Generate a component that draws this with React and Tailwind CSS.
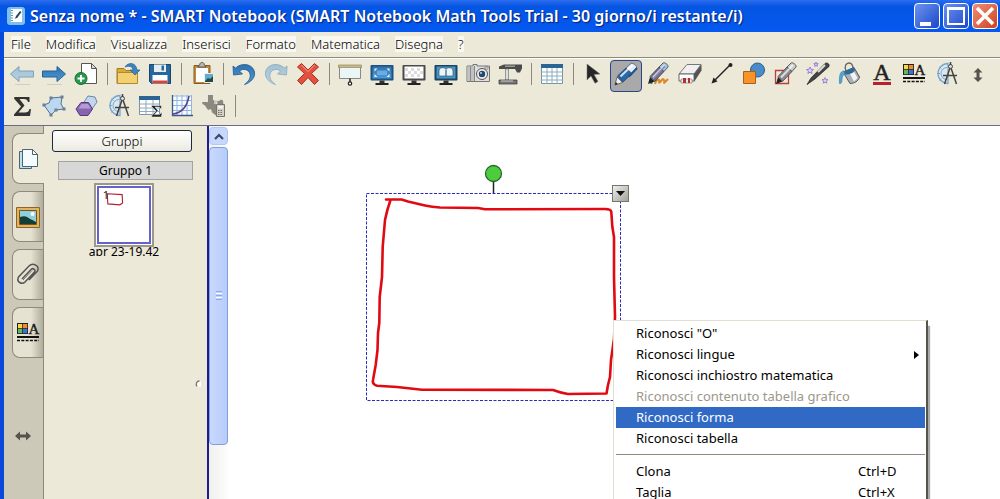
import React, { useState } from 'react';

const menus = ['File', 'Modifica', 'Visualizza', 'Inserisci', 'Formato', 'Matematica', 'Disegna', '?'];

const Svg = ({ children, size = 24 }) => (
  <svg width={size} height={size} viewBox="0 0 24 24" fill="none" className="block shrink-0 overflow-visible">
    {children}
  </svg>
);

const Monitor = ({ fill, frame, children }) => (
  <Svg>
    <rect x="0.5" y="3" width="23" height="15.5" rx="1" fill={frame} />
    <rect x="2.500" y="4.500" width="19" height="12" fill={fill} />
    {children}
    <path d="M9.500 18.500h5v2.500h-5z" fill="#333" />
    <path d="M5.500 21h13v2h-13z" fill="#222" />
  </Svg>
);

const Compass = () => (
  <Svg>
    <path d="M14 1.500a10 10 0 1 0 0 20z" fill="#dbe8f1" stroke="#7ba6c8" strokeWidth="1.300" />
    <path d="M13 5.500a6 6 0 1 0 0 12M3 11.500h3M5.500 4.500l2 2M5.500 18.500l2-2" stroke="#7ba6c8" />
    <path d="M16 6L10.500 22M17 6l5.500 16M9 13.500h14" stroke="#444" strokeWidth="1.500" />
    <circle cx="16.500" cy="4.500" r="2" fill="#ddd" stroke="#444" />
    <path d="M16.500 0v3" stroke="#444" strokeWidth="1.500" />
  </Svg>
);

const Properties = () => (
  <Svg>
    <rect x="1" y="2" width="11" height="11" fill="#222" />
    <path d="M2 3h4.200v4.200H2z" fill="#f7d64a" />
    <path d="M7 3h4.200v4.200H7z" fill="#ef8b2c" />
    <path d="M2 8h4.200v4.200H2z" fill="#5fb760" />
    <path d="M7 8h4.200v4.200H7z" fill="#3a72d8" />
    <text x="12.500" y="13" fontFamily="Liberation Serif, serif" fontSize="15" fill="#1c1c1c" stroke="#1c1c1c" strokeWidth="0.400">A</text>
    <path d="M1 16h22" stroke="#111" strokeWidth="2" />
    <path d="M1 19.500h22" stroke="#111" strokeWidth="1.500" strokeDasharray="3 1.300" />
  </Svg>
);

const Marker = ({ body, cap = '#e6e6e6' }) => (
  <>
    <path d="M2 22l2-7 4.500 4.500z" fill="#222" />
    <path d="M4 14.500L13 5l5 4.500-9.500 10z" fill={body} stroke="#39424e" strokeWidth="0.800" />
    <path d="M13 5l4-4c1.500-1.200 6 2 5 4l-4 4.500z" fill={cap} stroke="#39424e" strokeWidth="0.800" />
    <path d="M7 15.500L19 3" stroke="#fff" strokeOpacity="0.700" strokeWidth="2" />
  </>
);

const icons = {
  back: (
    <Svg>
      <path d="M0.500 12L9 4.500V9h14.500v6H9v4.500z" fill="url(#pale)" stroke="#7da2bb" />
      <path d="M5 22.500h15" stroke="#d2cebd" />
    </Svg>
  ),
  forward: (
    <Svg>
      <path d="M23.500 12L15 4.500V9H0.500v6H15v4.500z" fill="url(#blue)" stroke="#24629b" />
      <path d="M5 22.500h15" stroke="#d2cebd" />
    </Svg>
  ),
  addPage: (
    <Svg>
      <path d="M7.500 1.500h10l5 5v15h-15z" fill="#fff" stroke="#555" />
      <path d="M17.500 1.500v5h5z" fill="#ddd" stroke="#555" />
      <circle cx="7" cy="16.500" r="6" fill="#259a4d" stroke="#176b33" />
      <path d="M3.500 16.500h7M7 13v7" stroke="#fff" strokeWidth="2" />
    </Svg>
  ),
  open: (
    <Svg>
      <path d="M1 6.500h7l2 2h9v13H1z" fill="#d9a93c" stroke="#a47a20" />
      <path d="M1.500 10.500H21.500v11h-20z" fill="#f3d071" stroke="#b08930" />
      <path d="M9 5c3-5 11-5 12 3h3l-5 5-5-5h3c0-3-4-5-8-3z" fill="#3c85be" stroke="#245f91" strokeWidth="0.700" />
    </Svg>
  ),
  save: (
    <Svg>
      <path d="M1.500 2.500h21v19h-19l-2-2z" fill="#25679f" stroke="#184669" />
      <path d="M6 2.500h12v7.500H6z" fill="#e9edf0" />
      <path d="M13.500 3.500h2.500v5h-2.500z" fill="#25679f" />
      <path d="M4.500 13h15v8.500h-15z" fill="#fff" />
      <path d="M4.500 18.500h15v3h-15z" fill="#d2463b" />
    </Svg>
  ),
  paste: (
    <Svg>
      <path d="M4 3.500h16v18H4z" fill="#c48b3f" stroke="#875c22" />
      <path d="M6 6h12v14H6z" fill="#fff" />
      <path d="M8 5c0-2 2-1 2-3s4-2 4 0 2 1 2 3z" fill="#bbb" stroke="#555" />
      <path d="M14.500 11.500h9v9h-9z" fill="#5eaed2" stroke="#eee" />
      <path d="M15 19l3-3 2 1 3-3v6h-8z" fill="#244a3d" />
    </Svg>
  ),
  undo: (
    <Svg>
      <path d="M1 4l2.500 2C10 0 21 2 22.500 10c1 6-4 10.500-10 12.500 4-3 6.500-6.500 5.500-10.500C17 7.500 11 6 7.500 9l3 3-9 1z" fill="url(#blue)" stroke="#1e5b92" strokeWidth="0.800" />
    </Svg>
  ),
  redo: (
    <Svg>
      <path d="M23 4l-2.500 2C14 0 3 2 1.500 10c-1 6 4 10.500 10 12.500-4-3-6.500-6.500-5.500-10.500C7 7.500 13 6 16.500 9l-3 3 9 1z" fill="url(#pale)" stroke="#8ba7b8" strokeWidth="0.800" />
    </Svg>
  ),
  remove: (
    <Svg>
      <path d="M5.500 1.500L12 8l6.500-6.500 4 3.500-7 6.500 7 7-4 4-6.500-7-6.500 7-4-4 7-7-7-6.500z" fill="#e4503f" stroke="#a72c22" />
      <path d="M5.500 3L12 9.500 18.500 3" stroke="#f7a497" />
    </Svg>
  ),
  screen: (
    <Svg>
      <path d="M1.500 4h21v12.500h-21z" fill="#eaf5f6" stroke="#888" />
      <path d="M0.500 3h23v2.500h-23z" fill="#c9b98a" stroke="#8b7a4e" strokeWidth="0.600" />
      <path d="M12 16.500v4" stroke="#222" strokeWidth="1.500" />
      <circle cx="12" cy="21.500" r="1.700" fill="#fff" stroke="#222" strokeWidth="1.200" />
    </Svg>
  ),
  fullScreen: (
    <Monitor fill="url(#blue)" frame="#1d5380">
      <path d="M4.500 6.500h3l-3 3zM19.500 6.500h-3l3 3zM4.500 15h3l-3-3zM19.500 15h-3l3-3z" fill="#e6f4ff" />
      <path d="M7 8.500h10v4.500H7z" fill="#8cc4ee" fillOpacity="0.600" />
    </Monitor>
  ),
  transparent: (
    <Monitor fill="#fff" frame="#4a4a4a">
      <path d="M3 7.500h18M3 13.500h18" stroke="#dcdcdc" strokeWidth="3" strokeDasharray="3 3" />
      <path d="M6 10.500h15" stroke="#dcdcdc" strokeWidth="3" strokeDasharray="3 3" />
    </Monitor>
  ),
  dualPage: (
    <Monitor fill="#4d96c4" frame="#1b4563">
      <path d="M5 14V9c0-4 5-4 7-2 2-2 7-2 7 2v5z" fill="#eaf5fb" stroke="#1b4563" strokeWidth="0.600" />
      <path d="M12 7.500V14" stroke="#1b4563" />
    </Monitor>
  ),
  camera: (
    <Svg>
      <path d="M1 4h6V2.500h4V4h12.500v15.500H1z" fill="#dedede" stroke="#777" />
      <path d="M1.500 4.500h7v14.500h-7z" fill="#c2c2c2" />
      <path d="M4.500 4v15.500M8.500 4v15.500" stroke="#888" />
      <circle cx="16" cy="12" r="5.500" fill="#eee" stroke="#555" />
      <circle cx="16" cy="12" r="3.200" fill="#26466c" />
      <circle cx="15" cy="11" r="1" fill="#b8d8f5" />
      <path d="M19 5h3v2h-3z" fill="#fff" stroke="#555" strokeWidth="0.600" />
    </Svg>
  ),
  docCamera: (
    <Svg>
      <path d="M1 4.500L6 2.500h18v4l-2 4h-3l-2-3.500H1z" fill="#4b4b4b" />
      <path d="M7 3.500h10v1.500H7z" fill="#999" />
      <path d="M7.500 7h3v11h-3z" fill="#ddd" stroke="#777" strokeWidth="0.700" />
      <path d="M1 18h18v4H1z" fill="#777" stroke="#333" strokeWidth="0.700" />
      <path d="M3 19h12" stroke="#ccc" />
    </Svg>
  ),
  table: (
    <Svg>
      <path d="M1.500 2.500h21v19h-21z" fill="#fff" stroke="#7594aa" />
      <path d="M1 2h22v4H1z" fill="#2a6596" />
      <path d="M1.500 10h21M1.500 14h21M1.500 18h21M7 6v16M12 6v16M17 6v16" stroke="#8daabd" />
    </Svg>
  ),
  select: (
    <Svg>
      <path d="M5 2l13 10-6 0.500 4 7-3 1.800-4-7.300-4 4z" fill="#272727" stroke="#777" strokeWidth="0.500" />
    </Svg>
  ),
  pen: (
    <Svg>
      <path d="M1 23l2-8 5.500 5.500z" fill="#eee" stroke="#444" strokeWidth="0.700" />
      <path d="M1 23l.8-3 2 2z" fill="#222" />
      <path d="M3.500 14L12 6l6 5.500-9 8.500z" fill="#2a67a8" stroke="#1d3f6b" strokeWidth="0.800" />
      <path d="M12 6l5-4.500c2-1 6.500 2.500 5.500 4.500L18 11.500z" fill="#e4edf5" stroke="#42566e" strokeWidth="0.800" />
      <path d="M6.500 14.500L18.500 3" stroke="#fff" strokeOpacity="0.800" strokeWidth="2" />
      <path d="M15 14.500L23 6" stroke="#1d4f8f" strokeWidth="2" />
    </Svg>
  ),
  creativePen: (
    <Svg>
      <path d="M9 22c1-4 3-5 4-4s-1 4 1 2 3-4 4-2-1 4 1 2l3-3" stroke="#dd8427" strokeWidth="2" />
      <path d="M5 22c2-5 4-5 5-3" stroke="#3b9442" strokeWidth="2" />
      <Marker body="#667686" cap="#9cc7d8" />
      <path d="M7 17L19 4" stroke="#a976bb" strokeWidth="1.500" />
    </Svg>
  ),
  eraser: (
    <Svg>
      <path d="M9 2.500h14L16 12H1z" fill="#f0f0f0" stroke="#777" />
      <path d="M1 12h15v7H1z" fill="#fff" stroke="#666" />
      <path d="M16 12l7.500-9.500v6L16 20z" fill="#555" />
      <path d="M3 17h11v4H3z" fill="#eee" stroke="#555" strokeWidth="0.500" />
      <path d="M5 16h3v5H5zM10 16h2v5h-2z" fill="#b92e24" />
    </Svg>
  ),
  line: (
    <Svg>
      <path d="M4 19L20 3" stroke="#222" strokeWidth="1.500" />
      <circle cx="20.500" cy="3" r="2" fill="#222" />
      <path d="M1.500 21.500l2-6 4 4z" fill="#222" />
    </Svg>
  ),
  shapes: (
    <Svg>
      <circle cx="15.500" cy="8" r="7" fill="#4a8cc9" stroke="#2a5d91" />
      <path d="M1.500 9.500h12v12h-12z" fill="#f5942a" stroke="#b25d12" />
    </Svg>
  ),
  shapePen: (
    <Svg>
      <path d="M1.500 8.500h13v13h-13z" fill="#f2e7df" stroke="#b8423a" strokeWidth="1.300" />
      <Marker body="#8b8b8b" cap="#c9c9c9" />
    </Svg>
  ),
  magicPen: (
    <Svg>
      <path d="M1 22.500L5 16 19 1.500c2-1.500 5 0.500 4 3L9 17z" fill="#444" stroke="#222" strokeWidth="0.700" />
      <path d="M12 10l7-7" stroke="#ddd" strokeWidth="2" />
      <path d="M4 5l1 2.300 2.500.2-2 1.600.6 2.400L4 10.200l-2.100 1.300.6-2.400-2-1.600L3 7.300zM10 0l.6 1.600 1.700.1-1.300 1 .4 1.700L10 3.500l-1.400.9.400-1.700-1.300-1 1.700-.1zM19 15.500l.8 2 2.200.2-1.700 1.400.5 2.100-1.800-1.100-1.800 1.100.5-2.100-1.700-1.400 2.200-.2z" fill="#ddd0f5" stroke="#8e6dc9" strokeWidth="0.800" />
    </Svg>
  ),
  fill: (
    <Svg>
      <path d="M8 9C6 4 8 1 11 1s4 3 4 6" stroke="#666" strokeWidth="1.300" />
      <path d="M5 10l11-4.500L21.500 15c-1 4-5 6.500-9.500 6.500z" fill="#aab0b5" stroke="#555" />
      <path d="M11 10l4-2 4.500 8-3.500 3.500z" fill="#f4f4f4" />
      <path d="M5 10l11-4.500 1 2.500c-1 3-6 5-10.500 4.500z" fill="#2c6c9c" />
      <path d="M6 9c-4 0-5 5-4.500 12.500 2 .5 2.500-1.500 2.500-4s1-5 3-5.500z" fill="#55a4d3" stroke="#347aaa" strokeWidth="0.600" />
    </Svg>
  ),
  text: (
    <Svg>
      <text x="12" y="18" textAnchor="middle" fontFamily="Liberation Serif, serif" fontSize="24" fill="#222" stroke="#222" strokeWidth="0.500">A</text>
      <path d="M3 20h18v3H3z" fill="#b9202b" />
    </Svg>
  ),
  properties: <Properties />,
  measure: <Compass />,
  equation: (
    <Svg>
      <path d="M4.500 3h15v5h-1.500c-.5-2-1.500-3-4-3H9.500l5 6.500-6 7h6.500c2.500 0 4-1 4.500-3.500H21L20 22H4v-1.500l7-8-7-8z" fill="#333" />
    </Svg>
  ),
  irregular: (
    <Svg>
      <path d="M9 4l11-1-1 7 3 5-8 1-5 5-7-10 5-2z" fill="#bcd8f1" stroke="#56718d" />
      <path d="M7.500 2.500h3v3h-3zM18.500 1.500h3v3h-3zM20.500 13.500h3v3h-3zM12.500 14.500h3v3h-3zM7.500 19.500h3v3h-3zM.500 9.500h3v3h-3z" fill="#667f96" />
    </Svg>
  ),
  polygon: (
    <Svg>
      <path d="M14 2l7 1 2 5-5 7-7-2-1-5z" fill="#c2d6ee" stroke="#6b88aa" />
      <path d="M7 8.500h7.500l4 6.500-4.500 6.500H6L2 15z" fill="#8863b0" stroke="#55377c" />
      <path d="M7.500 10h6.500l3 4.500H4.500z" fill="#b59bd2" />
    </Svg>
  ),
  tableSum: (
    <Svg>
      <path d="M1.500 2.500h20v18h-20z" fill="#fff" stroke="#7893a7" />
      <path d="M1 2h21v4H1z" fill="#2a6596" />
      <path d="M1.500 10h20M1.500 14h20M1.500 17.500h20M8 6v15M15 6v15" stroke="#8daabd" />
      <path d="M13.500 11.500h10v3.500h-1c0-1.500-1-2-2.500-2h-3l3 3.500-3.500 4h4c1.500 0 2-.5 2.500-2h1l-.5 4.500h-10V22l4.500-5-4.500-4.500z" fill="#222" stroke="#fff" strokeWidth="0.500" />
    </Svg>
  ),
  graph: (
    <Svg>
      <path d="M2 1.500h20v20H2z" fill="#f7faff" />
      <path d="M7 1v21M12 1v21M17 1v21M21.500 1v21M2 2h20M2 6.500h20M2 11.500h20M2 16.500h20" stroke="#8eb7df" />
      <path d="M2.500 1v20.500H23" stroke="#385a82" strokeWidth="1.300" />
      <path d="M3 20c8-1 14-7 16-18" stroke="#5d3c91" strokeWidth="1.500" />
    </Svg>
  ),
  calculator: (
    <Svg>
      <path d="M6 1h5v5l6 1 2-1.500 2 1 1 8-7 3-1 4-4-3-1-3.500-3 1-3-4.500-2.500-1.500L0 8h6z" fill="#8b8880" />
      <path d="M13 4v6M13 1v1.500M16.500 3c-2 3-2 5-2 8" stroke="#ece9d8" strokeWidth="1.300" />
      <path d="M14.500 10.500h8v12h-8z" fill="#d3d0c8" stroke="#77746d" />
      <path d="M16 12h5v2.500h-5z" fill="#f4f2ea" />
      <path d="M16 16.500h5M16 18.500h5M16 20.500h5" stroke="#77746d" strokeDasharray="1.500 1" />
    </Svg>
  ),
};

const mainTools = [
  'back', 'forward', 'addPage', '|', 'open', 'save', '|', 'paste', '|', 'undo', 'redo', 'remove', '|',
  'screen', 'fullScreen', 'transparent', 'dualPage', 'camera', 'docCamera', '|', 'table', '|',
  'select', 'pen', 'creativePen', 'eraser', 'line', 'shapes', 'shapePen', 'magicPen', 'fill', 'text', 'properties', 'measure',
];

const mathTools = ['equation', 'irregular', 'polygon', 'measure', 'tableSum', 'graph', 'calculator', '|'];

const Separator = () => (
  <span className="flex h-7 w-[10px] shrink-0 items-center justify-center">
    <span className="h-[22px] w-px bg-[#8d8a7c]" />
  </span>
);

const ToolRow = ({ tools, active, onPick, children }) => (
  <div className="flex h-8">
    {tools.map((tool, i) =>
      tool === '|' ? (
        <Separator key={i} />
      ) : (
        <button
          key={i}
          type="button"
          aria-label={tool}
          onClick={() => onPick(tool)}
          className={
            active === tool
              ? 'flex size-8 shrink-0 items-start justify-center rounded border border-[#2c4684] bg-[#a9a9a9] pt-px'
              : 'flex size-8 shrink-0 items-start justify-center pt-0.5'
          }
        >
          {icons[tool]}
        </button>
      )
    )}
    {children}
  </div>
);

const TitleBar = () => (
  <header className="flex h-8 shrink-0 items-center bg-linear-to-b from-[#2a6cf0] via-[#0355e2] via-20% to-[#0558f0] pl-[7px] pr-0.5">
    <svg width="18" height="18" viewBox="0 0 18 18" className="shrink-0">
      <rect width="18" height="18" rx="3" fill="#7fc0ea" />
      <path d="M4 2h11v13H4z" fill="#fff" />
      <path d="M5 3v12" stroke="#3a6f98" strokeWidth="1.500" strokeDasharray="1 1.500" />
      <path d="M8 12l1-3 4-5 1.500 1-4 5.500z" fill="#27455e" />
    </svg>
    <h1 className="ml-[5px] min-w-0 flex-1 truncate font-['Noto_Sans',sans-serif] text-[16px] font-semibold leading-6 text-white [text-shadow:1px_1px_1px_#0a1f7a]">
      Senza nome * - SMART Notebook (SMART Notebook Math Tools Trial - 30 giorno/i restante/i)
    </h1>
    <div className="flex gap-[3px]">
      <button type="button" aria-label="Riduci a icona" className="size-[26px] rounded border border-white bg-linear-to-br from-[#6d93f0] to-[#1d45c8]">
        <svg viewBox="0 0 24 24"><path d="M5 18h11v4H5z" fill="#fff" /></svg>
      </button>
      <button type="button" aria-label="Ingrandisci" className="size-[26px] rounded border border-white bg-linear-to-br from-[#6d93f0] to-[#1d45c8]">
        <svg viewBox="0 0 24 24" fill="none"><path d="M4 5h16v15H4z" stroke="#fff" strokeWidth="2" /><path d="M3 4.500h18" stroke="#fff" strokeWidth="3" /></svg>
      </button>
      <button type="button" aria-label="Chiudi" className="size-[26px] rounded border border-white bg-linear-to-br from-[#ef8e72] to-[#cf3f1c]">
        <svg viewBox="0 0 24 24"><path d="M4 4l16 16M20 4L4 20" stroke="#fff" strokeWidth="3.500" /></svg>
      </button>
    </div>
  </header>
);

const tabs = [
  {
    name: 'Pagine',
    icon: (
      <Svg>
        <path d="M2.500 4.500h12v17h-12z" fill="#bfe0ea" stroke="#4d6570" />
        <path d="M5.500 2.500h10l5 5v12h-15z" fill="#f5fcff" stroke="#4d6570" />
        <path d="M15.500 2.500v5h5z" fill="#fff" stroke="#4d6570" />
      </Svg>
    ),
  },
  {
    name: 'Raccolta',
    icon: (
      <Svg>
        <path d="M.500 2.500h23v20H.500z" fill="#e0b562" stroke="#8d6425" />
        <path d="M3.500 5.500h17v14h-17z" fill="#8fd0dd" stroke="#7a5418" />
        <circle cx="16.500" cy="9" r="2" fill="#fff" />
        <path d="M4 12c5-2 8 0 10 2 3 1 4 2 6 3v2H4z" fill="#143e36" />
      </Svg>
    ),
  },
  {
    name: 'Allegati',
    icon: (
      <Svg>
        <path d="M6 16l9-9.500c2-2 5 0 3.500 2.500L9 19c-3 3-9 0-6.500-5L13 3c4-4 11 0 8.500 5L13 17" stroke="#555" strokeWidth="1.500" />
        <path d="M7 17l9-9.500" stroke="#777" />
      </Svg>
    ),
  },
  { name: 'Proprietà', icon: <Properties /> },
];

const Sidebar = () => {
  const [tab, setTab] = useState('Pagine');

  return (
    <aside className="flex shrink-0">
      <nav className="flex w-10 flex-col items-end gap-[7px] border-r border-[#8d8a7c] bg-[#cdc9b8] pt-[7px]">
        {tabs.map((t) => (
          <button
            key={t.name}
            type="button"
            aria-label={t.name}
            onClick={() => setTab(t.name)}
            className={
              tab === t.name
                ? 'relative -mr-px flex h-[51px] w-8 shrink-0 items-center justify-center rounded-l-lg border border-r-0 border-[#8d8a7c] bg-[#ece9d8]'
                : 'flex h-[51px] w-[31px] shrink-0 items-center justify-center rounded-l-lg border border-r-0 border-[#8d8a7c] bg-linear-to-r from-[#e6e2d2] from-60% to-[#b1ad9c]'
            }
          >
            {t.icon}
          </button>
        ))}
        <svg width="16" height="10" viewBox="0 0 16 10" className="mr-3 mt-[66px]">
          <path d="M0 5l5-4.500v3h6v-3L16 5l-5 4.500v-3H5v3z" fill="#55534b" />
        </svg>
      </nav>
      <section className="flex w-[163px] items-stretch bg-[#ece9d8]">
        <div className="flex flex-1 flex-col pl-2 pt-1">
          <button type="button" className="h-[22px] w-[140px] rounded-[3px] border border-[#1c2a3c] bg-linear-to-b from-white to-[#eceadf] text-[13px] leading-5">
            Gruppi
          </button>
          <h2 className="ml-1.5 mt-[9px] h-[19px] w-[135px] border border-[#a3a3a3] bg-[#d7d7d7] text-center text-[12px] font-normal leading-[18px]">
            Gruppo 1
          </h2>
          <figure className="ml-1.5 mt-[3px] flex w-[126px] flex-col items-center self-start pl-1.5">
            <div className="border-2 border-[#9a988c] bg-white p-px">
              <svg width="54" height="58" viewBox="0 0 54 58" fill="none" className="block border-2 border-[#6563c9]">
                <path d="M9 6l16 1 .500 9-3 2-13-1z" stroke="#b3202e" strokeWidth="1.200" />
                <text x="4" y="12" fontFamily="Noto Sans, sans-serif" fontSize="12" fontWeight="400" fill="#222">1</text>
              </svg>
            </div>
            <figcaption className="h-[9px] overflow-hidden whitespace-nowrap text-[12px] font-normal leading-[10px]">apr 23-19.42</figcaption>
          </figure>
        </div>
        <svg width="6" height="8" viewBox="0 0 6 8" className="mr-[6px] mt-[254px]" fill="none">
          <circle cx="4" cy="4" r="3" fill="#fff" />
          <path d="M4.500 1C1.500 1 .500 4 2 6.500" stroke="#77756a" strokeWidth="1.300" />
        </svg>
      </section>
    </aside>
  );
};

const ScrollBar = () => (
  <div className="flex w-[21px] shrink-0 flex-col border-l-2 border-[#1c1c8c] bg-linear-to-r from-[#f0f0ee] to-[#fdfdfb] pt-px">
    <button type="button" aria-label="Scorri su" className="flex h-[18px] shrink-0 items-center justify-center rounded-sm border border-[#b3c8f5] bg-[#c8d8fc]">
      <svg width="10" height="7" viewBox="0 0 10 7" fill="none"><path d="M1 6l4-4 4 4" stroke="#39496b" strokeWidth="2.200" /></svg>
    </button>
    <div className="mt-0.5 flex h-4/5 flex-col items-center justify-center gap-px rounded-sm border border-[#7f9fdc] bg-linear-to-r from-[#c9d9ff] to-[#b6ccfa]">
      <span className="h-px w-[6px] bg-[#8caaea]" />
      <span className="h-px w-[6px] bg-white" />
      <span className="h-px w-[6px] bg-[#8caaea]" />
      <span className="h-px w-[6px] bg-white" />
      <span className="h-px w-[6px] bg-[#8caaea]" />
    </div>
  </div>
);

const contextItems = [
  { label: 'Riconosci "O"' },
  { label: 'Riconosci lingue', sub: true },
  { label: 'Riconosci inchiostro matematica' },
  { label: 'Riconosci contenuto tabella grafico', disabled: true },
  { label: 'Riconosci forma', active: true },
  { label: 'Riconosci tabella' },
  null,
  { label: 'Clona', keys: 'Ctrl+D' },
  { label: 'Taglia', keys: 'Ctrl+X' },
];

const ContextMenu = () => (
  <div className="absolute left-[385px] top-[194px] w-[315px] border border-[#e2dfd0] border-r-2 border-r-[#55534b] bg-white pb-1 pl-0.5 pr-px pt-0.5 font-normal shadow-[2px_6px_1px_#a9a9a9]">
    {contextItems.map((item, i) =>
      item === null ? (
        <hr key={i} className="mb-[6px] mt-[5px] border-[#8d8a7c]" />
      ) : (
        <button
          key={i}
          type="button"
          disabled={item.disabled}
          className={
            item.active
              ? 'flex h-[21px] w-full items-center bg-[#316ac5] pl-5 pr-1.5 text-white'
              : 'flex h-[21px] w-full items-center pl-5 pr-1.5 text-black disabled:text-[#9b988a]'
          }
        >
          <span className="flex-1 whitespace-nowrap text-left">{item.label}</span>
          {item.keys && <span className="w-[61px] text-left">{item.keys}</span>}
          {item.sub && (
            <svg width="5" height="8" viewBox="0 0 5 8"><path d="M0 0l5 4-5 4z" fill="#000" /></svg>
          )}
        </button>
      )
    )}
  </div>
);

const Canvas = () => (
  <main className="relative min-w-0 flex-1 overflow-hidden bg-white">
    <svg width="255" height="208" viewBox="0 0 255 208" fill="none" className="absolute left-[138px] top-[67px] overflow-visible">
      <path d="M.500 .500h254v207H.500z" stroke="#2a2ac0" strokeDasharray="3 1.500" />
      <path d="M127.500 -12v12" stroke="#222" strokeWidth="1.500" />
      <circle cx="127.500" cy="-19.500" r="8" fill="#4fcc3c" stroke="#23682a" strokeWidth="1.300" />
      <path
        d="M20 6.500L35.500 6.500 42 8.500 59 12.500 Q66 14 74 14.500L112 15 119 16.300 239 16 Q245 16 245.300 19L246.300 33.500 248 44 248 84 249 124 248 146 245 167 244 184 242 192 240.500 200.500 202 201 Q195 200 187 197L56 196.700 31 194 11 192.700 Q6 191 7 187L9.700 172 11.500 157 12 140 13.300 130 13.700 104 16 84 16.700 54 19 27 Q21 17 24.500 7"
        stroke="#e20a12"
        strokeWidth="2.600"
        strokeLinecap="round"
        strokeLinejoin="round"
      />
    </svg>
    <button type="button" aria-label="Opzioni oggetto" className="absolute left-[384px] top-[59px] flex size-[17px] items-center justify-center border border-[#77756c] bg-linear-to-br from-[#eee] to-[#a5a39b]">
      <svg width="9" height="5" viewBox="0 0 9 5"><path d="M0 0h9L4.500 5z" fill="#111" /></svg>
    </button>
    <ContextMenu />
  </main>
);

const App = () => {
  const [tool, setTool] = useState('pen');

  return (
    <div className="flex h-screen flex-col overflow-hidden bg-[#ece9d8] font-['Noto_Sans',sans-serif] text-[13px] font-light text-black">
      <svg width="0" height="0" className="absolute">
        <linearGradient id="blue" x1="0" y1="0" x2="0" y2="1">
          <stop stopColor="#2f72ae" />
          <stop offset="1" stopColor="#4d9ad6" />
        </linearGradient>
        <linearGradient id="pale" x1="0" y1="0" x2="0" y2="1">
          <stop stopColor="#a0c3d8" />
          <stop offset="1" stopColor="#b9d0dc" />
        </linearGradient>
      </svg>
      <TitleBar />
      <div className="flex min-h-0 flex-1 flex-col border-l-4 border-[#0a48dc]">
        <nav className="flex h-[26px] shrink-0 items-center gap-[15px] border-b border-[#8d8a7c] pb-0.5 pl-[7px]">
          {menus.map((m) => (
            <button key={m} type="button" className="bg-[#f8f7f0] leading-4">{m}</button>
          ))}
        </nav>
        <div className="shrink-0 border-t border-white pb-px pl-0.5 pt-px">
          <ToolRow tools={mainTools} active={tool} onPick={setTool}>
            <button type="button" aria-label="Sposta barra" className="flex h-8 w-8 shrink-0 items-center justify-center pb-0.5">
              <svg width="10" height="14" viewBox="0 0 10 14"><path d="M5 0l4.500 4.500h-3v5h3L5 14 .500 9.500h3v-5h-3z" fill="#55534b" /></svg>
            </button>
          </ToolRow>
          <ToolRow tools={mathTools} active={tool} onPick={setTool} />
        </div>
        <div className="flex min-h-0 flex-1 border-t border-[#6c6a8c]">
          <Sidebar />
          <ScrollBar />
          <Canvas />
        </div>
      </div>
    </div>
  );
};

export default App;
